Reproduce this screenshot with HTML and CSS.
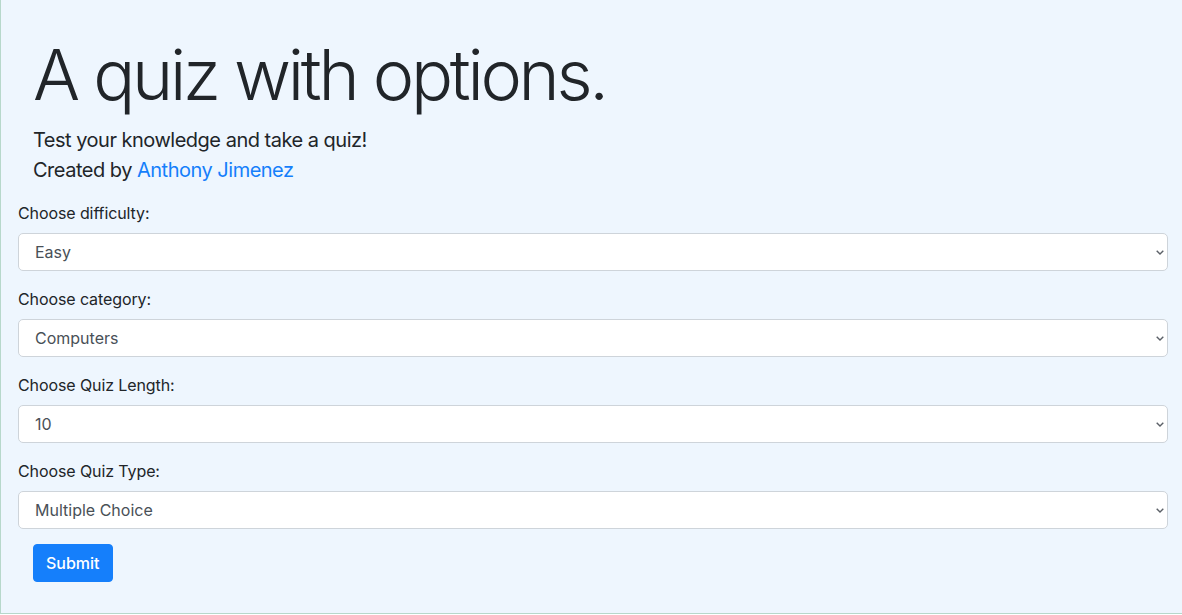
FILE: index.html
```html
<!DOCTYPE html>
<html lang="en">
<head>
<meta charset="utf-8">
<title>A quiz with options.</title>
<link rel="stylesheet" href="styles.css">
</head>
<body>
<div class="page">
  <header class="hero">
    <h1 class="hero-title">A quiz with options.</h1>
    <p class="hero-line">Test your knowledge and take a quiz!</p>
    <p class="hero-line">Created by <a class="hero-link" href="#">Anthony Jimenez</a></p>
  </header>
  <form class="quiz-form">
    <div class="field">
      <label class="field-label" for="difficulty">Choose difficulty:</label>
      <div class="select-wrap">
        <select class="field-select" id="difficulty">
          <option>Easy</option>
          <option>Medium</option>
          <option>Hard</option>
        </select>
        <svg class="chevron" width="8" height="5" viewBox="0 0 8 5"><path d="M0.7 0.7 L4 4 L7.3 0.7" fill="none" stroke="#5b6067" stroke-width="1.4"/></svg>
      </div>
    </div>
    <div class="field">
      <label class="field-label" for="category">Choose category:</label>
      <div class="select-wrap">
        <select class="field-select" id="category">
          <option>Computers</option>
        </select>
        <svg class="chevron" width="8" height="5" viewBox="0 0 8 5"><path d="M0.7 0.7 L4 4 L7.3 0.7" fill="none" stroke="#5b6067" stroke-width="1.4"/></svg>
      </div>
    </div>
    <div class="field">
      <label class="field-label" for="length">Choose Quiz Length:</label>
      <div class="select-wrap">
        <select class="field-select" id="length">
          <option>10</option>
          <option>20</option>
        </select>
        <svg class="chevron" width="8" height="5" viewBox="0 0 8 5"><path d="M0.7 0.7 L4 4 L7.3 0.7" fill="none" stroke="#5b6067" stroke-width="1.4"/></svg>
      </div>
    </div>
    <div class="field">
      <label class="field-label" for="type">Choose Quiz Type:</label>
      <div class="select-wrap">
        <select class="field-select" id="type">
          <option>Multiple Choice</option>
          <option>True / False</option>
        </select>
        <svg class="chevron" width="8" height="5" viewBox="0 0 8 5"><path d="M0.7 0.7 L4 4 L7.3 0.7" fill="none" stroke="#5b6067" stroke-width="1.4"/></svg>
      </div>
    </div>
    <div class="actions">
      <button class="submit-btn" type="submit">Submit</button>
    </div>
  </form>
</div>
</body>
</html>
```
FILE: styles.css
```css
* { box-sizing: border-box; }

html, body {
  margin: 0;
  padding: 0;
}

body {
  font-family: Inter, "Liberation Sans", sans-serif;
  color: #212529;
  background: #ffffff;
}

.page {
  height: 614px;
  background: #eef6fe;
  border-left: 1px solid #b7d8cb;
  border-bottom: 1px solid #b7d8cb;
}

.hero {
  padding: 33px 32px 0 32px;
}

.hero-title {
  margin: 0 0 8px 0;
  font-size: 70px;
  font-weight: 300;
  line-height: 84px;
  letter-spacing: -3.3px;
}

.hero-line {
  margin: 0;
  font-size: 20px;
  line-height: 30px;
  font-weight: 400;
  letter-spacing: -0.5px;
}

.hero-link {
  color: #157ffb;
  text-decoration: none;
}

.quiz-form {
  padding: 16px 14px 0 17px;
}

.field {
  margin-bottom: 16px;
}

.field-label {
  display: block;
  font-size: 16px;
  line-height: 24px;
  margin-bottom: 8px;
  letter-spacing: -0.1px;
}

.select-wrap {
  position: relative;
}

.field-select {
  display: block;
  width: 100%;
  height: 38px;
  padding: 0 30px 0 16px;
  font-family: inherit;
  font-size: 16px;
  color: #495057;
  background: #ffffff;
  border: 1px solid #ced4da;
  border-radius: 5px;
  -webkit-appearance: none;
  appearance: none;
  outline: none;
}

.chevron {
  position: absolute;
  right: 4px;
  top: 17px;
  pointer-events: none;
}

.actions {
  padding-left: 15px;
  margin-top: -1px;
}

.submit-btn {
  font-family: inherit;
  font-size: 16px;
  font-weight: 500;
  line-height: 24px;
  color: #ffffff;
  background: #157ffb;
  border: 1px solid #157ffb;
  border-radius: 4px;
  padding: 6px 12px;
  height: 38px;
  cursor: pointer;
}
```
